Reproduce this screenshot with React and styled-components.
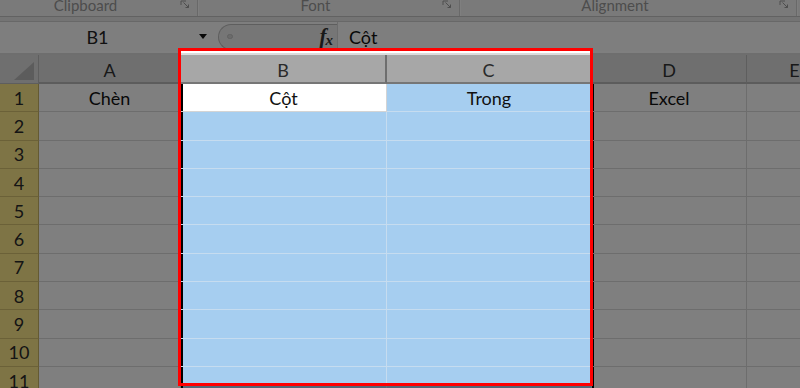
import React from "react";
import styled, { createGlobalStyle } from "styled-components";

const GlobalStyle = createGlobalStyle`
    html, body {
        margin: 0;
        padding: 0;
        background: #808080;
    }
    * {
        box-sizing: border-box;
    }
`;

const ROW_H = 28.3;
const COLS = [
    { key: "A", width: 142 },
    { key: "B", width: 206, selected: true },
    { key: "C", width: 205, selected: true },
    { key: "D", width: 155 },
    { key: "E", width: 96 },
];

const rows = [
    ["Chèn", "Cột", "Trong", "Excel", ""],
    ...Array.from({ length: 10 }, () => ["", "", "", "", ""]),
];

const Screen = styled.div`
    position: relative;
    width: 800px;
    height: 388px;
    overflow: hidden;
    background: #ffffff;
    font-family: Lato, "Noto Sans", sans-serif;
`;

const RibbonLabels = styled.div`
    display: flex;
    height: 17px;
    background: #f5f5f5;
    border-bottom: 1px solid #c4c4c4;
    overflow: hidden;
`;

const RibbonGroup = styled.div`
    display: flex;
    align-items: flex-start;
    width: ${(p) => p.$w}px;
    flex-shrink: 0;
    border-right: 1px solid #d2d2d2;
    box-shadow: 1px 0 0 #ffffff;
`;

const GroupLabel = styled.div`
    flex: 1;
    padding-right: 9px;
    margin-top: -2px;
    text-align: center;
    font-size: 15px;
    line-height: 15px;
    color: #9a9a9a;
`;

const Launcher = styled.svg`
    width: 10px;
    height: 9px;
    margin: 0 7px 0 0;
    flex-shrink: 0;
`;

const RibbonBand = styled.div`
    height: 4px;
    background: #e9e9e9;
`;

const FormulaBar = styled.div`
    display: flex;
    align-items: center;
    height: 30px;
    background: #fdfdfd;
    border-top: 1px solid #d0d0d0;
`;

const NameBox = styled.div`
    width: 195px;
    text-align: center;
    font-size: 18px;
    color: #222222;
`;

const NameArrow = styled.svg`
    width: 20px;
    height: 6px;
`;

const FormulaPill = styled.div`
    display: flex;
    align-items: center;
    justify-content: space-between;
    width: 119px;
    height: 26px;
    margin-left: 3px;
    padding: 0 5px 0 8px;
    background: #ededed;
    border: 1px solid #bcbcbc;
    border-right: none;
    border-radius: 13px 0 0 13px;
`;

const PillDot = styled.span`
    width: 6px;
    height: 5px;
    border-radius: 3px;
    background: #d6d6d6;
    border: 1px solid #c2c2c2;
`;

const FxMark = styled.span`
    font-family: "Liberation Serif", serif;
    font-style: italic;
    font-weight: bold;
    font-size: 21px;
    line-height: 1;
    color: #333333;
    letter-spacing: -1px;

    sub {
        font-size: 15px;
        vertical-align: -2px;
    }
`;

const FormulaText = styled.div`
    flex: 1;
    height: 100%;
    display: flex;
    align-items: center;
    padding-left: 11px;
    border-left: 1px solid #d8d8d8;
    font-size: 18px;
    color: #111111;
`;

const GridSpacer = styled.div`
    height: 4px;
    border-top: 2px solid #ffffff;
    background: #dcdcdc;
`;

const Sheet = styled.div`
    display: grid;
    grid-template-columns: 39px ${COLS.map((c) => `${c.width}px`).join(" ")};
    grid-template-rows: 29px repeat(11, ${ROW_H}px);
    width: max-content;
`;

const Corner = styled.div`
    display: flex;
    align-items: flex-end;
    justify-content: flex-end;
    padding: 0 4px 3px 0;
    background: #dedede;
    border-right: 1px solid #bcbcbc;
    border-bottom: 1px solid #bcbcbc;
`;

const ColHeader = styled.div`
    display: flex;
    align-items: center;
    justify-content: center;
    padding-top: 2px;
    font-size: 18px;
    color: ${(p) => (p.$selected ? "#2a2a2a" : "#333333")};
    background: ${(p) => (p.$selected ? "#a7a7a7" : "#dfdfdf")};
    border-right: ${(p) => (p.$selected ? "2px solid #6e6e6e" : "1px solid #bdbdbd")};
    border-bottom: 2px solid ${(p) => (p.$selected ? "#767676" : "#b8b8b8")};
`;

const RowHeader = styled.div`
    display: flex;
    align-items: center;
    justify-content: center;
    font-size: 18px;
    color: #2a2a2a;
    background: #fde88a;
    border-right: 1px solid #c9b466;
    border-bottom: 1px solid #d6c270;
`;

const Cell = styled.div`
    display: flex;
    align-items: center;
    justify-content: center;
    font-size: 18px;
    color: #111111;
    background: ${(p) => p.$bg};
    border-right: 1px solid ${(p) => p.$line};
    border-bottom: 1px solid ${(p) => p.$line};
    box-shadow: ${(p) => (p.$edge ? "inset 2px 0 0 #000000" : "none")};
`;

const Spotlight = styled.div`
    position: absolute;
    left: 178px;
    top: 48px;
    width: 415px;
    height: 338px;
    border: 3px solid #ff0000;
    box-shadow: 0 0 0 1200px rgba(0, 0, 0, 0.5);
    pointer-events: none;
`;

function LauncherIcon() {
    return (
        <Launcher viewBox="0 0 10 9">
            <path d="M1 5 V1 H6" fill="none" stroke="#9c9c9c" strokeWidth="1" />
            <path d="M3.5 2.5 L8.5 7.5 M8.5 4.5 V7.5 H5.5" fill="none" stroke="#9c9c9c" strokeWidth="1" />
        </Launcher>
    );
}

function cellStyle(colIndex, rowIndex) {
    const col = COLS[colIndex];
    if (col.selected) {
        if (colIndex === 1 && rowIndex === 0) return { bg: "#ffffff", line: "#d4d4d4" };
        return { bg: "#a6cef0", line: "#c6dcef" };
    }
    return { bg: "#ffffff", line: "#dadada" };
}

export default function App() {
    return (
        <>
            <GlobalStyle />
            <Screen>
                <RibbonLabels>
                    <RibbonGroup $w={198}>
                        <GroupLabel>Clipboard</GroupLabel>
                        <LauncherIcon />
                    </RibbonGroup>
                    <RibbonGroup $w={262}>
                        <GroupLabel>Font</GroupLabel>
                        <LauncherIcon />
                    </RibbonGroup>
                    <RibbonGroup $w={337}>
                        <GroupLabel>Alignment</GroupLabel>
                        <LauncherIcon />
                    </RibbonGroup>
                </RibbonLabels>
                <RibbonBand />
                <FormulaBar>
                    <NameBox>B1</NameBox>
                    <NameArrow viewBox="0 0 20 6">
                        <path d="M4 0 H12 L8 5 Z" fill="#111111" />
                    </NameArrow>
                    <FormulaPill>
                        <PillDot />
                        <FxMark>f<sub>x</sub></FxMark>
                    </FormulaPill>
                    <FormulaText>Cột</FormulaText>
                </FormulaBar>
                <GridSpacer />
                <Sheet>
                    <Corner>
                        <svg width="20" height="18" viewBox="0 0 20 18">
                            <path d="M0 18 L20 18 L20 0 Z" fill="#b9b9b9" />
                        </svg>
                    </Corner>
                    {COLS.map((c) => (
                        <ColHeader key={c.key} $selected={c.selected}>
                            {c.key}
                        </ColHeader>
                    ))}
                    {rows.map((row, r) => (
                        <React.Fragment key={r}>
                            <RowHeader>{r + 1}</RowHeader>
                            {row.map((text, c) => {
                                const s = cellStyle(c, r);
                                return (
                                    <Cell
                                        key={c}
                                        $bg={s.bg}
                                        $line={s.line}
                                        $edge={c === 1 || c === 3}
                                    >
                                        {text}
                                    </Cell>
                                );
                            })}
                        </React.Fragment>
                    ))}
                </Sheet>
                <Spotlight />
            </Screen>
        </>
    );
}
